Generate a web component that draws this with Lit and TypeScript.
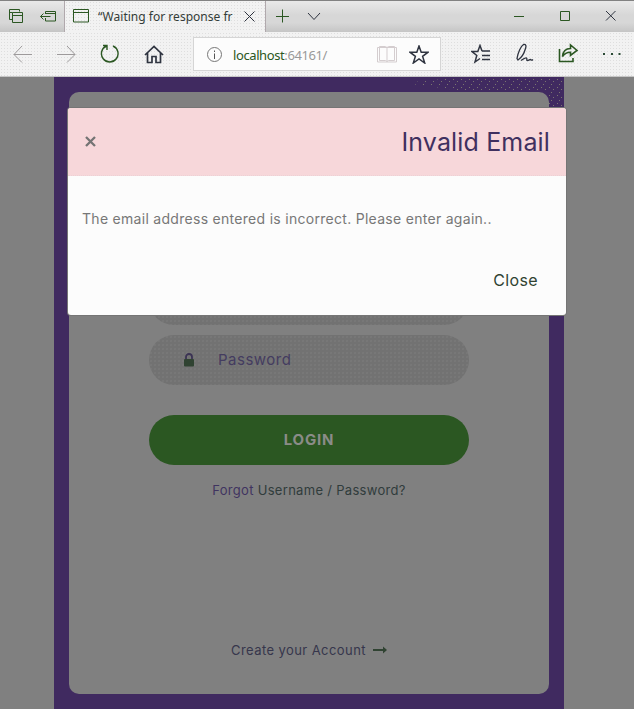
import { LitElement, html, css, svg } from "lit";
import { customElement } from "lit/decorators.js";

const icon = (w: number, h: number, body: unknown, cls = "") =>
  html`<svg class="icon ${cls}" width=${w} height=${h} viewBox="0 0 ${w} ${h}">${body}</svg>`;

@customElement("browser-chrome")
export class BrowserChrome extends LitElement {
  static styles = css`
    :host { display: block; height: 77px; font-family: "Noto Sans", sans-serif; }
    * { box-sizing: border-box; }
    .icon { display: block; flex: none; fill: none; stroke: #2b5722; stroke-width: 1; }
    .dark { stroke: #2f3440; }
    .bar { display: flex; height: 32px; border-top: 1px solid #828282; background: linear-gradient(#e9e9e9, #d7d7d7 45%, #d7d7d7 70%, #c5c5c5); }
    .left { width: 65px; display: flex; padding: 8px 0 0 9px; gap: 16px; border-right: 1px solid #b0a8ac; }
    .tab { width: 201px; display: flex; padding: 8px 0 0 8px; background: radial-gradient(circle, #dedede 0.5px, transparent 0.8px) 0 0 / 3px 3px, #f2f2f2; border-right: 1px solid #b0a8ac; }
    .title { width: 138px; margin-left: 9px; white-space: nowrap; font-size: 12px; line-height: 15px; letter-spacing: 0.02px; color: #343c38; }
    .tab .x { margin: 2px 0 0 8px; }
    .plus { margin: 8px 0 0 10px; }
    .chev { margin: 11px 0 0 18px; }
    .win { display: flex; margin-left: auto; padding: 9px 18px 0 0; gap: 35px; }
    .tools { display: flex; align-items: flex-start; height: 45px; background: radial-gradient(circle, #dedede 0.5px, transparent 0.8px) 0 0 / 3px 3px, #f2f2f2; border-bottom: 1px solid #c6c6c6; padding-left: 13px; }
    .grey { stroke: #9d9a9b; }
    .address { display: flex; width: 248px; height: 34px; margin: 5px 0 0 29px; border: 1px solid #d5d5d5; background: #fcfcfc; padding: 9px 11px 0 13px; }
    .url { margin-left: 10px; font-size: 13px; line-height: 16px; letter-spacing: -0.4px; width: 144px; color: #2b5722; white-space: nowrap; }
    .url span { color: #999; }
    .i1 { margin-top: 13px; }
    .i2 { margin: 13px 0 0 25px; }
    .i3 { margin: 12px 0 0 24px; }
    .i4 { margin: 12px 0 0 24px; }
    .star { margin: -2px 0 0 12px; }
    .book { margin-top: -1px; }
    .s1 { margin: 12px 0 0 30px; }
    .s2 { margin: 11px 0 0 24px; }
    .s3 { margin: 11px 0 0 24px; }
    .s4 { margin: 20px 0 0 24px; }
  `;

  render() {
    return html`
      <div class="bar">
        <div class="left">
          ${icon(15, 15, svg`<path d="M.5 10.500V.5h10v2M.5 3.500h3M.5 10.500h3M3.500 3.500h10v10h-10zM3.500 6.500h10"/>`)}
          ${icon(17, 13, svg`<path d="M5.500 5V2.500h10v9.500h-10V9M5.500 4.500h10M.5 7.500h10M3.500 4.500l-3 3 3 3"/>`)}
        </div>
        <div class="tab">
          ${icon(16, 14, svg`<path d="M.5.5h15v12.500H.5zM.5 3.500h15"/>`)}
          <div class="title">“Waiting for response fr</div>
          ${icon(11, 11, svg`<path d="M.5.5l10 10M10.500.5l-10 10"/>`, "x dark")}
        </div>
        ${icon(13, 14, svg`<path d="M6.500.5v13M0 7.500h13"/>`, "plus")}
        ${icon(14, 9, svg`<path d="M1 1l6 6.500L13 1"/>`, "chev dark")}
        <div class="win">
          ${icon(10, 11, svg`<path d="M0 6.500h10"/>`)}
          ${icon(11, 11, svg`<path d="M1.500 1.500h9v9h-9z"/>`)}
          ${icon(11, 11, svg`<path d="M1 1l9.500 9.500M10.500 1L1 10.500"/>`, "dark")}
        </div>
      </div>
      <div class="tools">
        ${icon(19, 18, svg`<path d="M19 9.500H1M9 1L1 9.500 9 17.500"/>`, "i1 grey")}
        ${icon(19, 18, svg`<path d="M0 9.500h18M10 1l8 8.500-8 8"/>`, "i2 grey")}
        ${icon(20, 20, svg`<path stroke-width="1.400" d="M3 1.500h4V6M6.500 2A8.300 8.300 0 1 0 13 2"/>`, "i3")}
        ${icon(20, 20, svg`<path stroke-width="1.700" d="M1 11l9-8.500L19 11M3.500 9v9.500H8v-6h4v6h4.500V9"/>`, "i4 dark")}
        <div class="address">
          ${icon(16, 16, svg`<circle cx="7.500" cy="7.500" r="7" stroke="#777"/><path stroke="#555" d="M7.500 6.500V12M7.500 3.500V5"/>`)}
          <div class="url">localhost<span>:64161/</span></div>
          ${icon(20, 18, svg`<path stroke="#d4cdcf" d="M.5 1.500h19v14.500H.5zM2.500.5h6l1.500 1 1.500-1h6v14h-6l-1.500 1-1.500-1h-6zM10 1.500v14"/>`, "book")}
          ${icon(20, 19, svg`<path stroke-width="1.500" d="M10 1l2.200 6.200H19l-5.400 4.100L15.700 18 10 13.900 4.300 18l2.100-6.700L1 7.200h6.800z"/>`, "star dark")}
        </div>
        ${icon(20, 20, svg`<path stroke-width="1.500" d="M11 7L9 1.500 6.800 7.500H1l4.800 4L4 18l5-3.500M11 7h8M11 11.500h8M11 15.500h8"/>`, "s1 dark")}
        ${icon(19, 20, svg`<path stroke-width="1.300" d="M3 17L2 15.500C3 9.500 6 3 8.500 1.500c2.500-.5 3 1.500 2 4C9 11 6 15 3 17zM6 17.500c2-1.500 4.500-3 5.500-2.500 1 1-.5 2.500 1 2.500s2-1.200 3-1c.8.800 1.500 1 2.500 0"/>`, "s2 dark")}
        ${icon(21, 20, svg`<path stroke-width="1.600" d="M1.500 6v12.500H15V15M4.500 13.500C5 8 8 5.500 12.500 5.500V2L19 7.500l-6.500 5V9.300C9 9.200 6.500 10.500 4.500 13.500z"/>`, "s3")}
        ${icon(18, 3, svg`<path fill="#2b4a35" stroke="none" d="M0 1h2v2H0zM8 1h2v2H8zM15.500 1h2v2h-2z"/>`, "s4")}
      </div>`;
  }
}

@customElement("error-dialog")
export class ErrorDialog extends LitElement {
  static styles = css`
    :host { display: flex; flex-direction: column; box-sizing: border-box; width: 498px; height: 207px; border-radius: 3px; overflow: hidden; background: #fcfcfc; box-shadow: 0 0 0 1px #757575; font-family: Inter, sans-serif; }
    header { display: flex; align-items: center; justify-content: space-between; height: 67px; padding: 0 16px; background: #f7d7da; border-bottom: 1px dotted #ecd2d5; box-sizing: content-box; }
    svg { display: block; }
    h1 { margin: 0; font-size: 25px; line-height: 34px; font-weight: 400; letter-spacing: 0.15px; color: #40305f; }
    p { margin: 33px 0 0 14px; font-size: 14px; line-height: 20px; letter-spacing: 0.29px; color: #777; white-space: nowrap; }
    footer { margin: 39px 28px 0 0; text-align: right; font-size: 16px; line-height: 24px; letter-spacing: 0.35px; color: #304332; }
  `;

  render() {
    return html`
      <header>
        <svg width="13" height="11" viewBox="0 0 13 11"><path d="M2 1l9 9M11 1l-9 9" stroke="#747474" stroke-width="2.300"/></svg>
        <h1>Invalid Email</h1>
      </header>
      <p>The email address entered is incorrect. Please enter again..</p>
      <footer><span>Close</span></footer>`;
  }
}

@customElement("app-root")
export class AppRoot extends LitElement {
  static styles = css`
    :host { display: block; position: relative; width: 634px; height: 709px; overflow: hidden; background: #808080; font-family: Inter, sans-serif; }
    * { box-sizing: border-box; }
    .page { width: 510px; height: 632px; margin-left: 54px; padding: 15px; background: #402a60; }
    .speckle { display: block; width: 160px; height: 31px; margin: -15px -15px -16px auto; }
    .card { display: flex; flex-direction: column; align-items: center; height: 602px; border-radius: 10px; background: #808080; padding-top: 183px; color: #403460; position: relative; }
    .field { width: 320px; height: 50px; flex: none; border-radius: 25px; margin-bottom: 10px; display: flex; align-items: center; padding: 0 0 1px 34px; font-size: 15px; letter-spacing: 0.5px; color: #443c60; background: radial-gradient(circle, #7e7e7e 0.6px, transparent 0.8px) 0 0 / 4px 4px, #727272; }
    .field svg { margin-right: 23px; }
    .login { width: 320px; height: 50px; flex: none; border: 0; border-radius: 25px; margin-top: 20px; background: #2b5722; color: #8a8c88; font: 700 15px/50px Inter, sans-serif; letter-spacing: 0.8px; padding: 0; }
    .forgot { margin-top: 15px; font-size: 13px; line-height: 20px; letter-spacing: 0.3px; white-space: nowrap; }
    .forgot b { font-weight: 400; color: #303c3c; }
    .create { display: flex; align-items: center; gap: 7px; margin-top: 140px; font-size: 13px; line-height: 20px; letter-spacing: 0.42px; white-space: nowrap; color: #36364c; }
    error-dialog { position: absolute; left: 68px; top: 108px; }
  `;

  render() {
    return html`
      <browser-chrome></browser-chrome>
      <main class="page">
        <svg class="speckle" width="160" height="31">
          <defs>
            <pattern id="dots" width="8" height="8" patternUnits="userSpaceOnUse"><path d="M1 2h1v1H1zM5 4h1v1H5zM3 7h1v1H3z" fill="#7a7470"/></pattern>
          </defs>
          <path d="M0 6L60 0H160V31H144V14L60 14z" fill="url(#dots)"/>
        </svg>
        <section class="card">
          <div class="field"></div>
          <div class="field">
            <svg width="12" height="14" viewBox="0 0 12 14"><path d="M3 7V4a3 3 0 0 1 6 0v3" fill="none" stroke="#3b3354" stroke-width="1.800"/><rect x="1" y="6" width="10" height="7.500" rx="1" fill="#304332"/></svg>
            <span class="ph">Password</span>
          </div>
          <button class="login"><span>LOGIN</span></button>
          <div class="forgot"><span>Forgot <b>Username / Password?</b></span></div>
          <div class="create"><span>Create your Account</span>
            <svg width="14" height="8" viewBox="0 0 14 8"><path d="M0 4h11" stroke="#304332" stroke-width="2"/><path d="M10 .5L14 4l-4 3.500z" fill="#304332"/></svg>
          </div>
        </section>
      </main>
      <error-dialog></error-dialog>`;
  }
}
